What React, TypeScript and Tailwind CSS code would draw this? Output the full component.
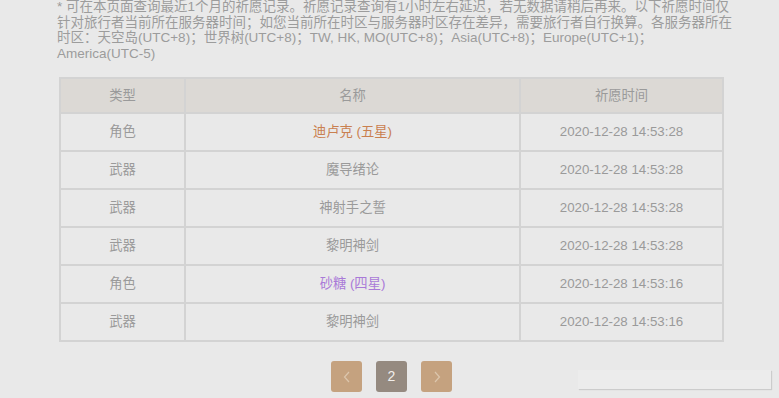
import React from "react";

const rows = [
  { type: "角色", name: "迪卢克 (五星)", color: "text-[#c98050]", time: "2020-12-28 14:53:28" },
  { type: "武器", name: "魔导绪论", color: "text-[#9a9a9a]", time: "2020-12-28 14:53:28" },
  { type: "武器", name: "神射手之誓", color: "text-[#9a9a9a]", time: "2020-12-28 14:53:28" },
  { type: "武器", name: "黎明神剑", color: "text-[#9a9a9a]", time: "2020-12-28 14:53:28" },
  { type: "角色", name: "砂糖 (四星)", color: "text-[#a97ad8]", time: "2020-12-28 14:53:16" },
  { type: "武器", name: "黎明神剑", color: "text-[#9a9a9a]", time: "2020-12-28 14:53:16" },
];

const font = { fontFamily: '"Liberation Sans", "Noto Sans CJK SC", sans-serif' };

export default function App() {
  return (
    <div className="relative w-[779px] h-[398px] overflow-hidden bg-[#e9e9e9]" style={font}>
      <div className="pl-[57px] -mt-[1px] text-[13.5px] leading-[15.5px] text-[#9c9c9c] whitespace-nowrap">
        <div>* 可在本页面查询最近1个月的祈愿记录。祈愿记录查询有1小时左右延迟，若无数据请稍后再来。以下祈愿时间仅</div>
        <div>针对旅行者当前所在服务器时间；如您当前所在时区与服务器时区存在差异，需要旅行者自行换算。各服务器所在</div>
        <div>时区：天空岛(UTC+8)；世界树(UTC+8)；TW, HK, MO(UTC+8)；Asia(UTC+8)；Europe(UTC+1)；</div>
        <div>America(UTC-5)</div>
      </div>
      <div className="pl-[59px] mt-[16px]">
        <table className="w-[665px] border-collapse border-2 border-[#d3d3d3] text-[13.3px] text-[#9a9a9a] text-center">
          <thead>
            <tr className="h-[35px] bg-[#dcd9d5]">
              <th className="w-[125px] border-2 border-[#d3d3d3] font-normal">类型</th>
              <th className="w-[335px] border-2 border-[#d3d3d3] font-normal">名称</th>
              <th className="border-2 border-[#d3d3d3] font-normal">祈愿时间</th>
            </tr>
          </thead>
          <tbody>
            {rows.map((r, i) => (
              <tr key={i} className="h-[38px]">
                <td className="border-2 border-[#d3d3d3]">{r.type}</td>
                <td className={`border-2 border-[#d3d3d3] ${r.color}`}>{r.name}</td>
                <td className="border-2 border-[#d3d3d3]">{r.time}</td>
              </tr>
            ))}
          </tbody>
        </table>
      </div>
      <div className="flex justify-center gap-[14px] mt-[19px] pl-[4px]">
        <div className="w-[31px] h-[31px] rounded-[3px] bg-[#c5a27f] flex items-center justify-center">
          <svg width="10" height="12" viewBox="0 0 10 12" fill="none" stroke="#dcc6ad" strokeWidth="1.2">
            <path d="M7 1 L2.5 6 L7 11" />
          </svg>
        </div>
        <div className="w-[31px] h-[31px] rounded-[3px] bg-[#958a80] flex items-center justify-center text-[14px] text-[#f2efec]">
          2
        </div>
        <div className="w-[31px] h-[31px] rounded-[3px] bg-[#c5a27f] flex items-center justify-center">
          <svg width="10" height="12" viewBox="0 0 10 12" fill="none" stroke="#dcc6ad" strokeWidth="1.2">
            <path d="M3 1 L7.5 6 L3 11" />
          </svg>
        </div>
      </div>
      <div className="absolute left-[578px] top-[370px] w-[193px] h-[19px] bg-[#ececec] shadow-[1px_1px_1px_rgba(0,0,0,0.12)]" />
    </div>
  );
}
